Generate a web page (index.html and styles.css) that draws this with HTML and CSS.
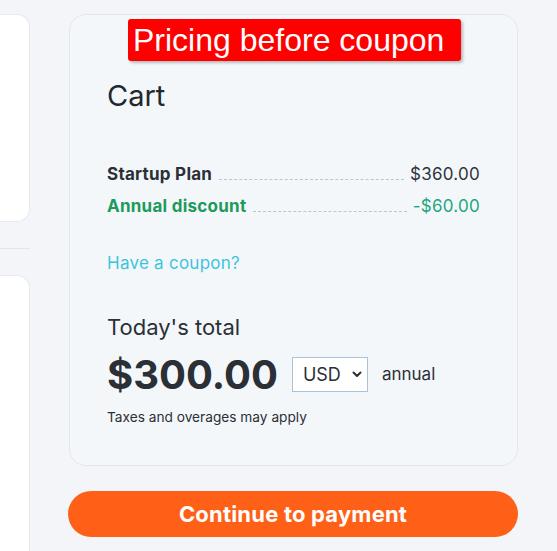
FILE: index.html
```html
<!DOCTYPE html>
<html lang="en">
<head>
<meta charset="utf-8">
<title>Cart</title>
<link rel="stylesheet" href="styles.css">
</head>
<body>
<div class="page">
  <div class="side">
    <div class="side-card first"></div>
    <div class="side-rule"></div>
    <div class="side-card second"></div>
  </div>
  <div class="main">
    <div class="cart-card">
      <div class="badge">Pricing before coupon</div>
      <h2 class="cart-title">Cart</h2>
      <div class="line-items">
        <div class="item">
          <span class="item-name">Startup Plan</span>
          <span class="leader"></span>
          <span class="item-price">$360.00</span>
        </div>
        <div class="item discount">
          <span class="item-name">Annual discount</span>
          <span class="leader"></span>
          <span class="item-price">-$60.00</span>
        </div>
      </div>
      <a class="coupon" href="#">Have a coupon?</a>
      <div class="total-label">Today's total</div>
      <div class="total-row">
        <span class="total-amount">$300.00</span>
        <span class="currency">USD
          <svg class="chev" width="10" height="7" viewBox="0 0 10 7"><path d="M1.5 1.5l3.5 3.5 3.5-3.5" fill="none" stroke="#2b2f36" stroke-width="2" stroke-linecap="round" stroke-linejoin="round"/></svg>
        </span>
        <span class="period">annual</span>
      </div>
      <div class="note">Taxes and overages may apply</div>
    </div>
    <button class="pay">Continue to payment</button>
  </div>
</div>
</body>
</html>
```

FILE: styles.css
```css
html, body {
  margin: 0;
  padding: 0;
}
body {
  background: #f3f5f8;
  font-family: Inter, "Noto Sans", sans-serif;
  color: #2b2f36;
  width: 557px;
  height: 551px;
  overflow: hidden;
}
.page {
  display: flex;
  gap: 38px;
  align-items: flex-start;
}
.side {
  width: 30px;
  display: flex;
  flex-direction: column;
  padding-top: 14px;
}
.side-card {
  background: #ffffff;
  border: 1px solid #e6eaef;
  border-left: none;
  border-radius: 0 13px 13px 0;
  box-sizing: border-box;
}
.side-card.first {
  height: 208px;
}
.side-rule {
  height: 1px;
  background: #e2e6ec;
  margin: 26px 0 26px;
}
.side-card.second {
  height: 300px;
  border-bottom: none;
  border-radius: 0 13px 0 0;
}
.main {
  width: 450px;
  padding-top: 14px;
  display: flex;
  flex-direction: column;
}
.cart-card {
  position: relative;
  margin-left: 1px;
  width: 449px;
  height: 452px;
  box-sizing: border-box;
  background: #f4f7fa;
  border: 1px solid #e3e8ee;
  border-radius: 17px;
  padding: 0 37px;
  display: flex;
  flex-direction: column;
}
.badge {
  position: absolute;
  left: 58px;
  top: 4px;
  width: 333px;
  height: 42px;
  box-sizing: border-box;
  background: #ff0000;
  color: #ffffff;
  border-radius: 3px;
  box-shadow: 2px 2px 3px rgba(0,0,0,0.25);
  font-family: "Liberation Sans", Arial, sans-serif;
  font-size: 32px;
  line-height: 42px;
  padding-left: 5px;
  white-space: nowrap;
}
.cart-title {
  margin: 63px 0 0;
  font-size: 29px;
  line-height: 36px;
  font-weight: 400;
  color: #23272e;
}
.line-items {
  margin-top: 48px;
  display: flex;
  flex-direction: column;
  gap: 8px;
}
.item {
  display: flex;
  align-items: flex-end;
  font-size: 17px;
  letter-spacing: 0.25px;
  line-height: 24px;
}
.item-name {
  font-weight: 700;
  color: #2b2f36;
}
.leader {
  flex: 1;
  border-bottom: 1px dashed #b3c8dc;
  margin: 0 6px 6px 7px;
}
.item-price {
  color: #2f343c;
}
.discount .item-name {
  color: #1d9a5c;
}
.discount .item-price {
  color: #22a582;
}
.coupon {
  margin-top: 33px;
  font-size: 17px;
  letter-spacing: 0.25px;
  line-height: 24px;
  color: #3dc4da;
  text-decoration: none;
  align-self: flex-start;
}
.total-label {
  margin-top: 38px;
  font-size: 22px;
  line-height: 28px;
  color: #2b2f36;
}
.total-row {
  margin-top: 9px;
  height: 48px;
  display: flex;
  align-items: center;
}
.total-amount {
  font-size: 40px;
  font-weight: 700;
  color: #2b2f36;
}
.currency {
  margin-left: 14px;
  width: 76px;
  height: 35px;
  box-sizing: border-box;
  background: #ffffff;
  border: 1px solid #a9c2dc;
  display: flex;
  align-items: center;
  justify-content: space-between;
  padding: 0 5px 0 10px;
  font-size: 18px;
  color: #2b2f36;
}
.chev {
  display: block;
}
.period {
  margin-left: 14px;
  font-size: 17px;
  color: #2b2f36;
}
.note {
  margin-top: 10px;
  font-size: 13.7px;
  line-height: 18px;
  color: #2b2f36;
}
.pay {
  margin-top: 25px;
  width: 450px;
  height: 46px;
  border: none;
  border-radius: 23px;
  background: #ff6017;
  color: #ffffff;
  font-family: Inter, "Noto Sans", sans-serif;
  font-size: 22px;
  letter-spacing: 0.2px;
  font-weight: 700;
  padding: 0;
  cursor: pointer;
}
```
